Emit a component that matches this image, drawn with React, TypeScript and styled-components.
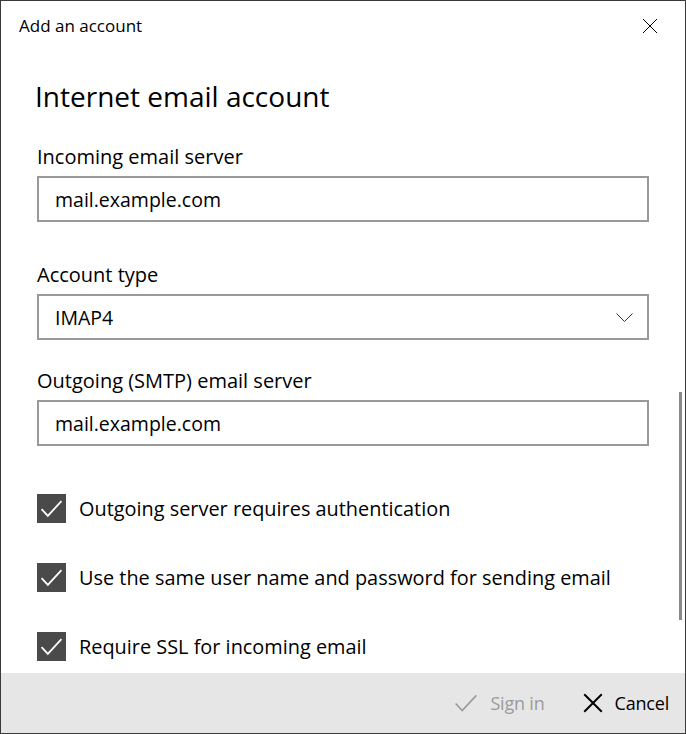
import React from "react";
import styled, { createGlobalStyle } from "styled-components";

const GlobalStyle = createGlobalStyle`
  html, body {
    margin: 0;
    padding: 0;
    background: #ffffff;
  }
  * {
    box-sizing: border-box;
  }
`;

const Window = styled.div`
  width: 686px;
  height: 734px;
  border: 1px solid #3a3a3a;
  display: flex;
  flex-direction: column;
  background: #ffffff;
  font-family: "Open Sans", "Noto Sans", sans-serif;
  color: #000000;
  overflow: hidden;
`;

const TitleBar = styled.div`
  height: 49px;
  display: flex;
  align-items: center;
  justify-content: space-between;
  padding: 0 27px 0 18px;
  flex-shrink: 0;
`;

const TitleText = styled.span`
  font-size: 17px;
`;

const IconButton = styled.span`
  display: flex;
  align-items: center;
  justify-content: center;
  width: 17px;
  height: 17px;
`;

const Content = styled.div`
  position: relative;
  flex: 1;
  padding: 0 36px 0 36px;
  overflow: hidden;
`;

const ScrollThumb = styled.div`
  position: absolute;
  right: 3px;
  top: 342px;
  width: 3px;
  height: 228px;
  background: #8a8a8a;
`;

const Heading = styled.h1`
  margin: 28px 0 0 -2px;
  font-size: 28px;
  font-weight: 400;
  line-height: 36px;
`;

const Field = styled.div<{ $gap: number }>`
  margin-top: ${(p) => p.$gap}px;
  display: flex;
  flex-direction: column;
  gap: 6px;
`;

const Label = styled.label`
  font-size: 20px;
  line-height: 26px;
`;

const Box = styled.div`
  height: 46px;
  border: 2px solid #999999;
  display: flex;
  align-items: center;
  justify-content: space-between;
  padding: 0 14px 0 16px;
  font-size: 19.5px;
`;

const Checks = styled.div`
  margin-top: 48px;
  display: flex;
  flex-direction: column;
  gap: 40px;
`;

const CheckRow = styled.div`
  display: flex;
  align-items: center;
  gap: 13px;
  height: 29px;
`;

const CheckBox = styled.span`
  width: 29px;
  height: 29px;
  background: #4a4a4a;
  display: flex;
  align-items: center;
  justify-content: center;
  flex-shrink: 0;
`;

const CheckText = styled.span`
  font-size: 19.9px;
`;

const Footer = styled.div`
  height: 60px;
  background: #e6e6e6;
  display: flex;
  align-items: center;
  justify-content: flex-end;
  padding: 0 16px 0 0;
  gap: 38px;
  flex-shrink: 0;
`;

const FooterButton = styled.span<{ $disabled?: boolean }>`
  display: flex;
  align-items: center;
  gap: 12px;
  font-size: 18px;
  letter-spacing: -0.2px;
  color: ${(p) => (p.$disabled ? "#9b9b9b" : "#000000")};
`;

const CloseIcon = ({ size = 16, color = "#000", width = 1 }) => (
  <svg width={size} height={size} viewBox="0 0 16 16">
    <path d="M1 1 L15 15 M15 1 L1 15" stroke={color} strokeWidth={width} fill="none" />
  </svg>
);

const CheckMark = ({ color = "#fff", size = 23, width = 1.7 }) => (
  <svg width={size} height={size} viewBox="0 0 22 22">
    <path d="M1.5 11.5 L7.5 18 L20.5 4" stroke={color} strokeWidth={width} fill="none" />
  </svg>
);

const Chevron = () => (
  <svg width="17" height="9" viewBox="0 0 17 9">
    <path d="M0.5 0.5 L8.5 8.5 L16.5 0.5" stroke="#333" strokeWidth="1" fill="none" />
  </svg>
);

const options = [
  "Outgoing server requires authentication",
  "Use the same user name and password for sending email",
  "Require SSL for incoming email",
];

export default function App() {
  return (
    <>
      <GlobalStyle />
      <Window>
        <TitleBar>
          <TitleText>Add an account</TitleText>
          <IconButton>
            <CloseIcon />
          </IconButton>
        </TitleBar>
        <Content>
          <ScrollThumb />
          <Heading>Internet email account</Heading>
          <Field $gap={30}>
            <Label>Incoming email server</Label>
            <Box>mail.example.com</Box>
          </Field>
          <Field $gap={40}>
            <Label>Account type</Label>
            <Box>
              IMAP4
              <Chevron />
            </Box>
          </Field>
          <Field $gap={28}>
            <Label>Outgoing (SMTP) email server</Label>
            <Box>mail.example.com</Box>
          </Field>
          <Checks>
            {options.map((o) => (
              <CheckRow key={o}>
                <CheckBox>
                  <CheckMark />
                </CheckBox>
                <CheckText>{o}</CheckText>
              </CheckRow>
            ))}
          </Checks>
        </Content>
        <Footer>
          <FooterButton $disabled>
            <CheckMark color="#9b9b9b" size={24} width={1.5} />
            Sign in
          </FooterButton>
          <FooterButton>
            <CloseIcon size={20} width={1.6} />
            Cancel
          </FooterButton>
        </Footer>
      </Window>
    </>
  );
}
